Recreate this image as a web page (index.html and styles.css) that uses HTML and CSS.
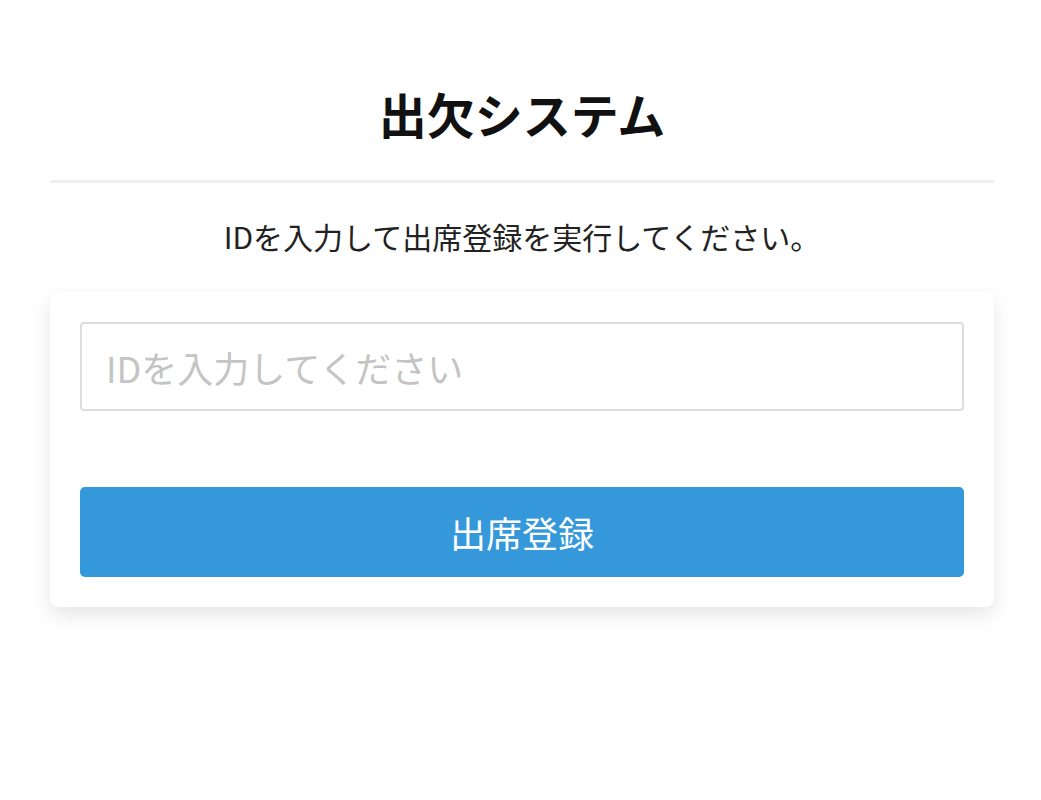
FILE: index.html
```html
<!DOCTYPE html>
<html lang="ja">
<head>
<meta charset="utf-8">
<title>出欠システム</title>
<link rel="stylesheet" href="styles.css">
</head>
<body>
<div class="container">
  <header class="header">
    <h1 class="title">出欠システム</h1>
  </header>
  <p class="lead">IDを入力して出席登録を実行してください。</p>
  <form class="card" onsubmit="return false;">
    <input class="id-input" type="text" placeholder="IDを入力してください">
    <button class="submit" type="submit">出席登録</button>
  </form>
</div>
</body>
</html>
```
FILE: styles.css
```css
* { box-sizing: border-box; }
body {
  margin: 0;
  padding: 0 0 0 3px;
  min-height: 100vh;
  background: #fff;
  font-family: "Noto Sans CJK JP", "Noto Sans", sans-serif;
  color: #222;
}
.container {
  max-width: 944px;
  margin: 0 auto;
  padding: 80px 0 80px;
}
.header {
  border-bottom: 3px solid #f0f0f0;
  padding-bottom: 33px;
}
.title {
  margin: 0;
  text-align: center;
  font-size: 48px;
  font-weight: 700;
  color: #111;
  line-height: 1.4;
}
.lead {
  margin: 32px 0 35px;
  text-align: center;
  font-size: 30px;
  color: #222;
  line-height: 1.4;
}
.card {
  display: flex;
  flex-direction: column;
  gap: 76px;
  padding: 30px;
  background: #fff;
  border-radius: 8px;
  box-shadow: 0 8px 20px rgba(0, 0, 0, 0.1);
}
.id-input {
  height: 89px;
  border: 2px solid #ddd;
  border-radius: 4px;
  padding: 0 24px;
  font-family: inherit;
  font-size: 36px;
  color: #222;
  outline: none;
}
.id-input::placeholder { color: #c4c4c4; }
.submit {
  height: 90px;
  border: none;
  border-radius: 5px;
  background: #3498db;
  color: #fff;
  font-family: inherit;
  font-size: 36px;
  cursor: pointer;
}
```
